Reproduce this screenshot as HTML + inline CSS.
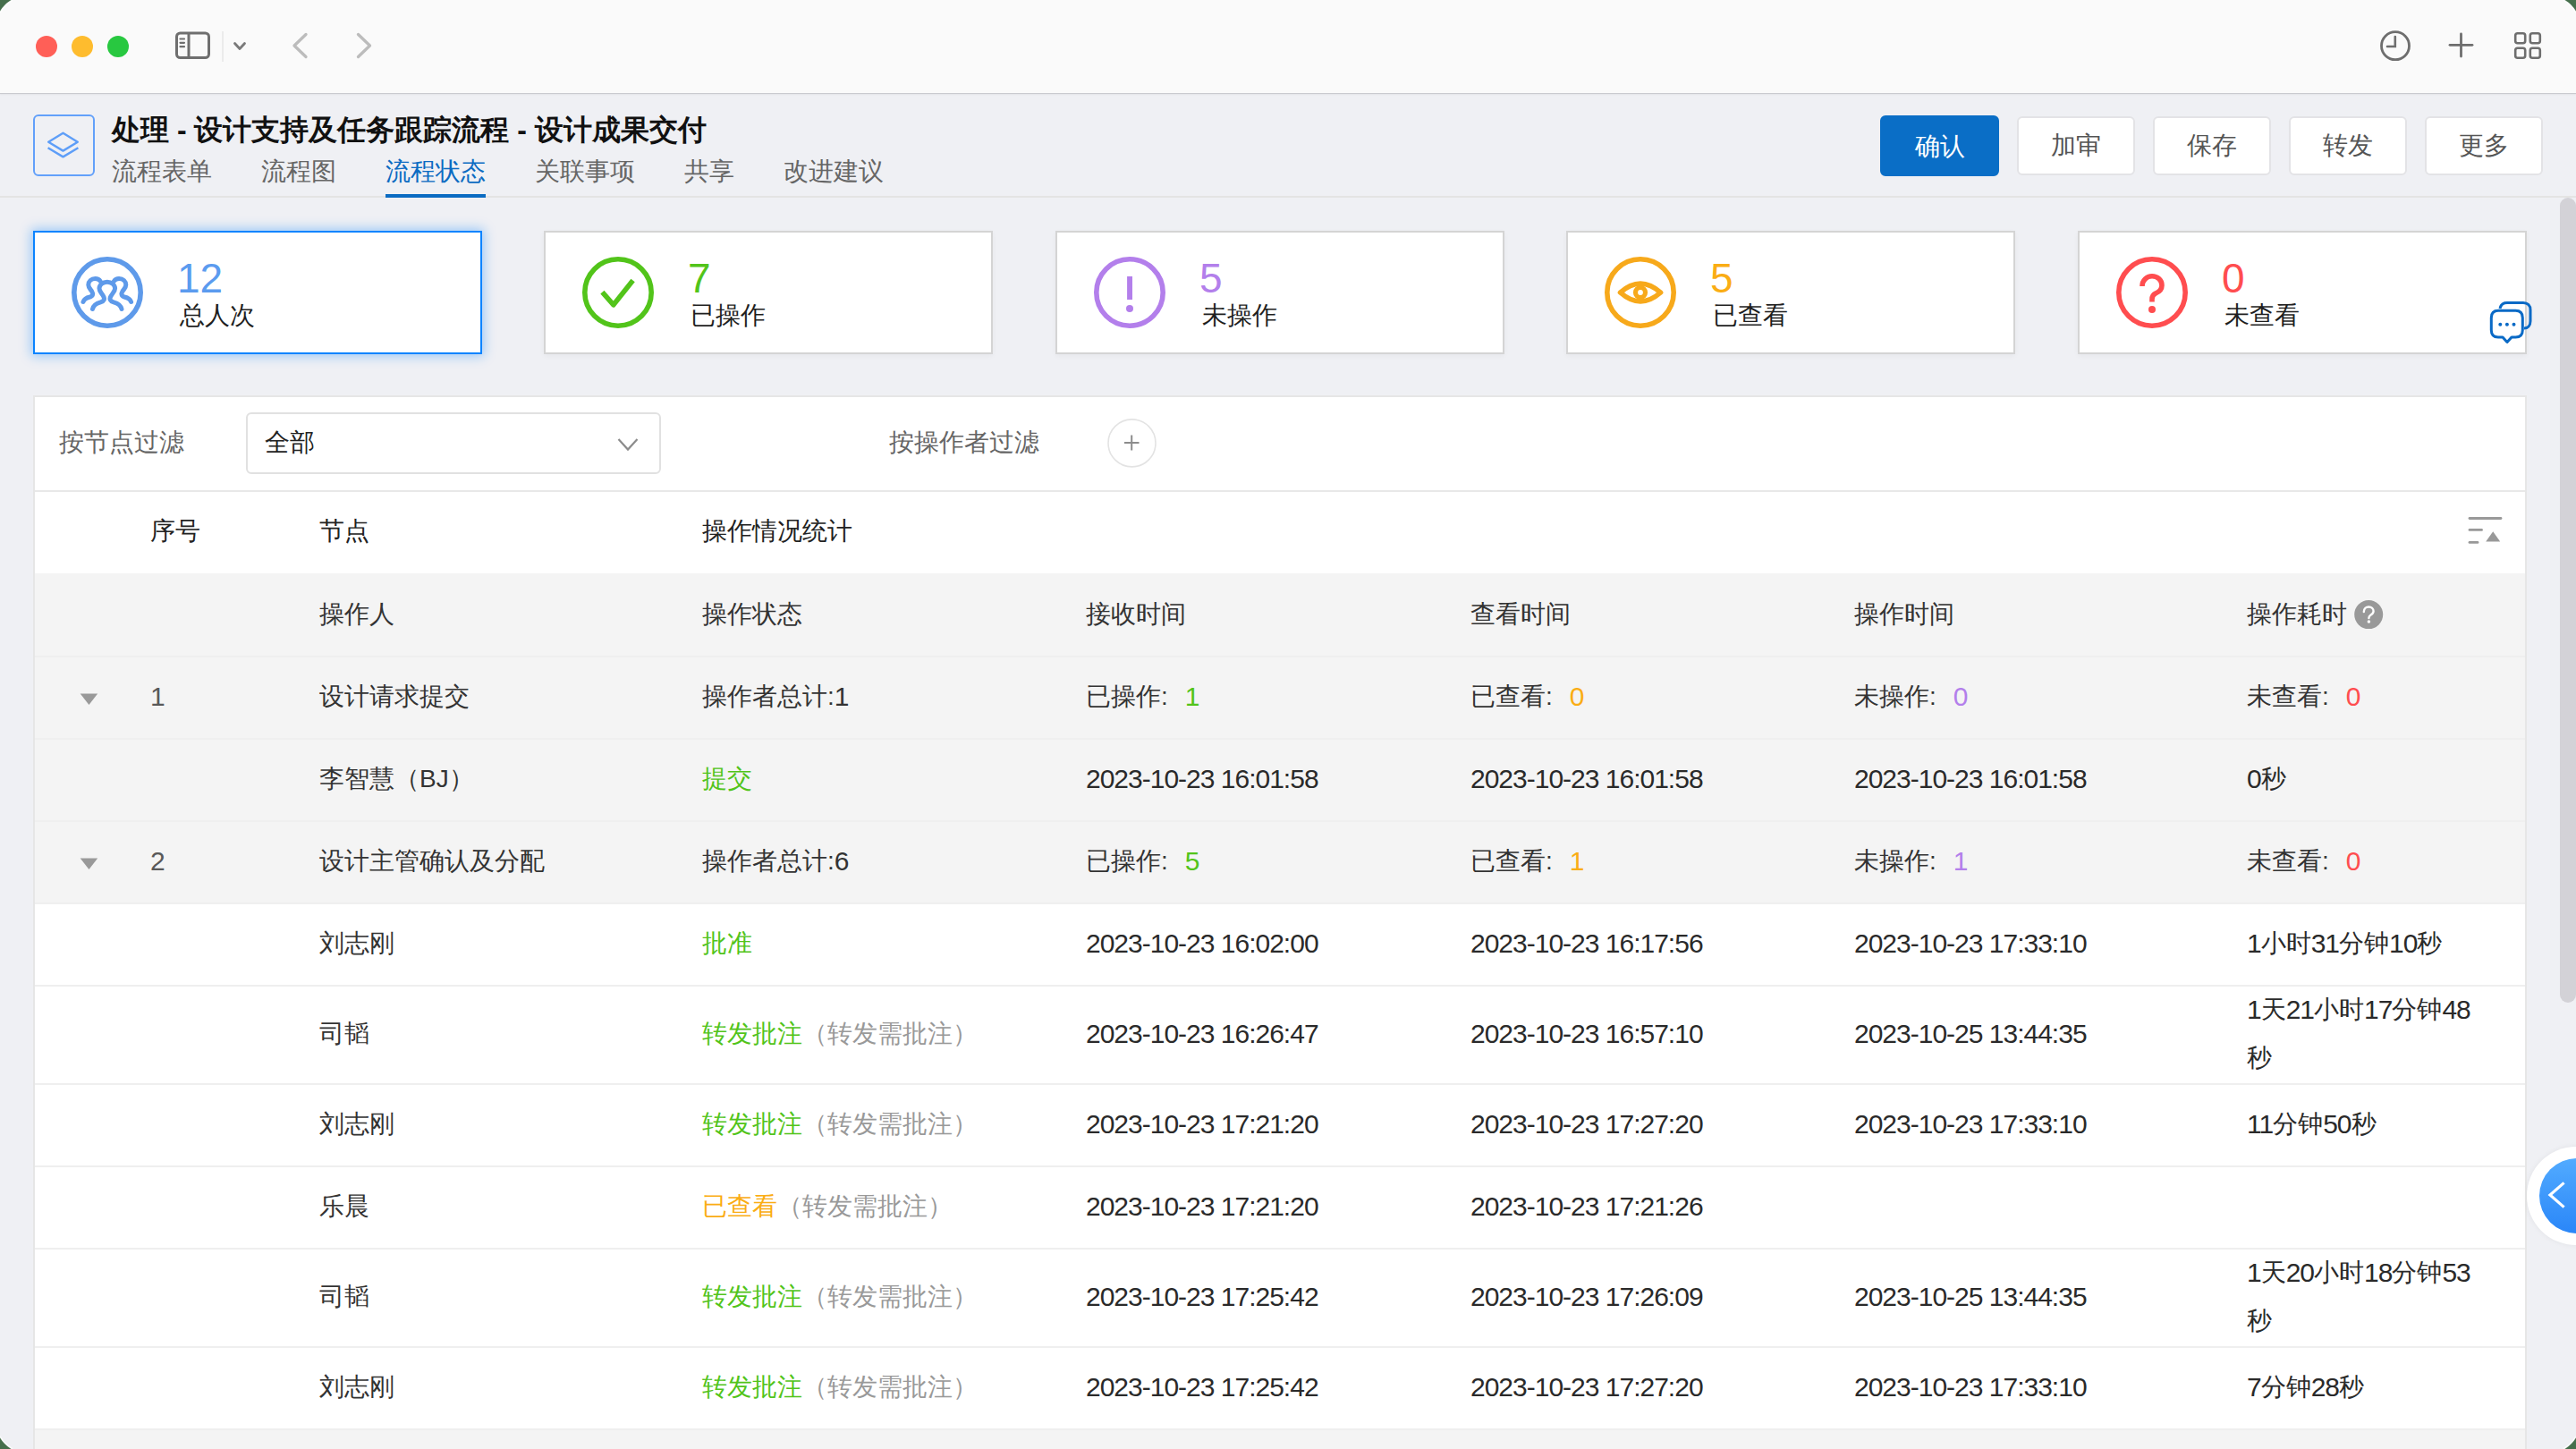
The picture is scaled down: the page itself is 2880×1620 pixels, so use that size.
<!DOCTYPE html>
<html><head><meta charset="utf-8">
<style>
*{margin:0;padding:0;box-sizing:border-box}
html,body{width:2880px;height:1620px;overflow:hidden;background:#466f4c;font-family:"Liberation Sans",sans-serif}
.win{position:absolute;left:0;top:0;width:2880px;height:1620px;overflow:hidden;background:#eff0f4;clip-path:path('M14,0 H2866 Q2875,5 2880,14 V1606 Q2875,1615 2866,1620 H14 Q5,1615 0,1606 V14 Q5,5 14,0 Z')}
.abs{position:absolute}
.t{position:absolute;white-space:nowrap;font-size:28px;line-height:40px;height:40px}
.titlebar{position:absolute;left:0;top:0;width:2880px;height:105px;background:#fafafa;border-bottom:1.5px solid #c9cacf;box-shadow:0 1px 1.5px rgba(0,0,20,.05)}
.hdr-line{position:absolute;left:0;top:219px;width:2880px;height:2px;background:#e4e4e3}
.btn{position:absolute;top:130px;width:132px;height:66px;border-radius:6px;background:#fff;border:2px solid #e3e3e6;font-size:28px;line-height:62px;text-align:center;color:#555}
.btn.pri{background:#0a6ec6;border-color:#0a6ec6;color:#fff;top:129px;height:68px;line-height:66px;width:133px}
.card{position:absolute;top:258px;width:502px;height:138px;background:#fff;border:2px solid #d4d4d4;box-shadow:0 2px 6px rgba(0,0,0,.04)}
.card.sel{border-color:#0a84ff;box-shadow:0 0 12px 2px rgba(10,132,255,.38)}
.card .num{position:absolute;left:159px;top:27px;font-size:46px;line-height:48px}
.card .lab{position:absolute;left:162px;top:73px;font-size:28px;line-height:40px;color:#1f1f1f}
.card svg{position:absolute;left:40px;top:26px}
.panel{position:absolute;left:37px;top:443px;width:2788px;height:1200px;background:#fff;border:2px solid #e6e6e6}
.row{position:absolute;left:0;width:2784px;border-top:2px solid #ededed}
.gray{background:#f4f4f4}
.c333{color:#333}
.cl{margin-right:19px}
.d{font-size:30px;letter-spacing:-1px;vertical-align:top;line-height:40px}
.g{color:#52c41a}.o{color:#faad14}.p{color:#b37feb}.r{color:#ff4d4f}.gr{color:#999}
</style></head><body>
<div class="win">
  <!-- titlebar -->
  <div class="titlebar">
    <div class="abs" style="left:40px;top:40px;width:24px;height:24px;border-radius:50%;background:#ff5f57"></div>
    <div class="abs" style="left:80px;top:40px;width:24px;height:24px;border-radius:50%;background:#febc2e"></div>
    <div class="abs" style="left:120px;top:40px;width:24px;height:24px;border-radius:50%;background:#28c840"></div>
    <svg class="abs" style="left:190px;top:30px" width="240" height="46" viewBox="190 30 240 46">
      <rect x="197.5" y="37" width="36" height="27.5" rx="4" fill="none" stroke="#6f6f6f" stroke-width="3"/>
      <line x1="211" y1="37" x2="211" y2="64.5" stroke="#6f6f6f" stroke-width="3"/>
      <line x1="201.5" y1="43.5" x2="206" y2="43.5" stroke="#6f6f6f" stroke-width="2.2" stroke-linecap="round"/>
      <line x1="201.5" y1="47.8" x2="206" y2="47.8" stroke="#6f6f6f" stroke-width="2.2" stroke-linecap="round"/>
      <line x1="201.5" y1="52.2" x2="206" y2="52.2" stroke="#6f6f6f" stroke-width="2.2" stroke-linecap="round"/>
      <line x1="249" y1="35" x2="249" y2="69" stroke="#e6e6e6" stroke-width="1.5"/>
      <polyline points="262.5,48.5 268,54.5 273.5,48.5" fill="none" stroke="#7a7a7a" stroke-width="2.8" stroke-linecap="round" stroke-linejoin="round"/>
      <polyline points="342,38.5 329,51 342,63.5" fill="none" stroke="#bcbcbc" stroke-width="3.3" stroke-linecap="round" stroke-linejoin="round"/>
      <polyline points="400.5,38.5 413.5,51 400.5,63.5" fill="none" stroke="#bcbcbc" stroke-width="3.3" stroke-linecap="round" stroke-linejoin="round"/>
    </svg>
    <svg class="abs" style="left:2650px;top:25px" width="210" height="55" viewBox="2650 25 210 55">
      <circle cx="2678" cy="51.2" r="15.5" fill="none" stroke="#6e6e6e" stroke-width="2.8"/>
      <polyline points="2677.8,41 2677.8,52 2669,52" fill="none" stroke="#6e6e6e" stroke-width="2.6" stroke-linecap="round"/>
      <line x1="2751.5" y1="38" x2="2751.5" y2="63" stroke="#6e6e6e" stroke-width="2.8" stroke-linecap="round"/>
      <line x1="2739" y1="50.3" x2="2764" y2="50.3" stroke="#6e6e6e" stroke-width="2.8" stroke-linecap="round"/>
      <rect x="2812.2" y="37.2" width="11" height="11" rx="2.5" fill="none" stroke="#6e6e6e" stroke-width="2.6"/>
      <rect x="2828.8" y="37.2" width="11" height="11" rx="2.5" fill="none" stroke="#6e6e6e" stroke-width="2.6"/>
      <rect x="2812.2" y="53.7" width="11" height="11" rx="2.5" fill="none" stroke="#6e6e6e" stroke-width="2.6"/>
      <rect x="2828.8" y="53.7" width="11" height="11" rx="2.5" fill="none" stroke="#6e6e6e" stroke-width="2.6"/>
    </svg>
  </div>

  <!-- page header -->
  <svg class="abs" style="left:30px;top:120px" width="90" height="90" viewBox="30 120 90 90">
    <rect x="38" y="129" width="67" height="67" rx="5" fill="none" stroke="#62a0fa" stroke-width="2"/>
    <polygon points="70.5,148.8 86.8,158.7 70.5,168.6 54.2,158.7" fill="none" stroke="#5e9ef8" stroke-width="2.4" stroke-linejoin="round"/>
    <polyline points="53.6,165.3 70.5,175.4 87.4,165.3" fill="none" stroke="#5e9ef8" stroke-width="2.4" stroke-linejoin="round"/>
  </svg>
  <div class="t" style="left:125px;top:125px;font-size:32px;font-weight:bold;color:#111">处理 - 设计支持及任务跟踪流程 - 设计成果交付</div>
  <div class="t" style="left:125px;top:172px;color:#666">流程表单</div>
  <div class="t" style="left:292px;top:172px;color:#666">流程图</div>
  <div class="t" style="left:431px;top:172px;color:#0b6bc2">流程状态</div>
  <div class="t" style="left:598px;top:172px;color:#666">关联事项</div>
  <div class="t" style="left:765px;top:172px;color:#666">共享</div>
  <div class="t" style="left:876px;top:172px;color:#666">改进建议</div>
  <div class="hdr-line"></div>
  <div class="abs" style="left:431px;top:217px;width:112px;height:4px;background:#0b6bc2"></div>

  <div class="btn pri" style="left:2102px">确认</div>
  <div class="btn" style="left:2255px">加审</div>
  <div class="btn" style="left:2407px">保存</div>
  <div class="btn" style="left:2559px">转发</div>
  <div class="btn" style="left:2711px">更多</div>

  <!-- CARDS -->
  
  <div class="card sel" style="left:37px">
    <svg width="82" height="82" viewBox="9 9 82 82">
      <circle cx="50" cy="50" r="37.2" fill="none" stroke="#5e9aea" stroke-width="5.6"/>
      <g fill="none" stroke="#5e9aea" stroke-width="5" stroke-linecap="round" stroke-linejoin="round">
        <path d="M33.5,68.5 C34.5,63.5 38,62 42.5,60.8 C46.5,59.7 47.5,57.5 45.5,54 C43.5,50.5 41,48.5 41,45.5 A8.8,7.2 0 0 1 58.6,45.5 C58.6,48.5 56,50.5 54,54 C52,57.5 53,59.7 57,60.8 C61.5,62 65,63.5 66,68.5"/>
        <path d="M23,60.5 C24,57.5 27,55.8 30.5,55 C34,54 34.3,51.5 32.8,49 C31.3,46.5 28.8,44.5 28.8,41.5 C28.8,37.5 32,34.5 36.5,34.5 C39,34.5 41,35.5 42.3,37.5"/>
        <path d="M76.6,60.5 C75.6,57.5 72.6,55.8 69.1,55 C65.6,54 65.3,51.5 66.8,49 C68.3,46.5 70.8,44.5 70.8,41.5 C70.8,37.5 67.6,34.5 63.1,34.5 C60.6,34.5 58.6,35.5 57.3,37.5"/>
      </g>
    </svg>
    <div class="num" style="color:#5b9bef">12</div>
    <div class="lab">总人次</div>
  </div>
  <div class="card" style="left:608px">
    <svg width="82" height="82" viewBox="9 9 82 82">
      <circle cx="50" cy="50" r="37.2" fill="none" stroke="#52c41a" stroke-width="5.6"/>
      <polyline points="32.4,49.7 44.9,63.8 66.6,36.6" fill="none" stroke="#52c41a" stroke-width="5.6" stroke-linejoin="round"/>
    </svg>
    <div class="num" style="color:#52c41a">7</div>
    <div class="lab">已操作</div>
  </div>
  <div class="card" style="left:1180px">
    <svg width="82" height="82" viewBox="9 9 82 82">
      <circle cx="50" cy="50" r="37.2" fill="none" stroke="#b37feb" stroke-width="5.6"/>
      <rect x="47.1" y="32" width="5.9" height="26" fill="#b37feb"/>
      <circle cx="50" cy="68" r="4" fill="#b37feb"/>
    </svg>
    <div class="num" style="color:#b37feb">5</div>
    <div class="lab">未操作</div>
  </div>
  <div class="card" style="left:1751px">
    <svg width="82" height="82" viewBox="9 9 82 82">
      <circle cx="50" cy="50" r="37.2" fill="none" stroke="#f7a91b" stroke-width="5.6"/>
      <path d="M27.5,50 Q50,30.2 72.6,50 Q50,69.8 27.5,50 Z" fill="none" stroke="#f7a91b" stroke-width="5.6" stroke-linejoin="round"/>
      <circle cx="50" cy="50" r="5.5" fill="none" stroke="#f7a91b" stroke-width="5.2"/>
    </svg>
    <div class="num" style="color:#faad14">5</div>
    <div class="lab">已查看</div>
  </div>
  <div class="card" style="left:2323px">
    <svg width="82" height="82" viewBox="9 9 82 82">
      <circle cx="50" cy="50" r="37.2" fill="none" stroke="#ff4d4f" stroke-width="5.6"/>
      <path d="M39,43 C39,36.5 44,31.8 50,31.8 C56,31.8 61,36 61,42 C61,47 57.5,49.5 54,51 C51,52.5 50,55 50,57.5 L50,60.5" fill="none" stroke="#ff4d4f" stroke-width="5.6"/>
      <circle cx="50" cy="69" r="4" fill="#ff4d4f"/>
    </svg>
    <div class="num" style="color:#ff4d4f">0</div>
    <div class="lab">未查看</div>
  </div>
  <svg class="abs" style="left:2775px;top:330px" width="64" height="60" viewBox="2775 330 64 60">
    <path d="M2795,345 C2796,340 2799,338.5 2803,338.5 L2821,338.5 C2826,338.5 2829,341.5 2829,346.5 L2829,359 C2829,364 2826,367 2822,367" fill="none" stroke="#0a6ac6" stroke-width="3"/>
    <path d="M2793,347.3 L2812.5,347.3 C2817.5,347.3 2820.3,350.3 2820.3,355.3 L2820.3,369 C2820.3,374 2817.5,377 2812.5,377 L2808,377 L2803,382.5 L2798,377 L2793,377 C2788,377 2785.3,374 2785.3,369 L2785.3,355.3 C2785.3,350.3 2788,347.3 2793,347.3 Z" fill="#fff" stroke="#0a6ac6" stroke-width="3" stroke-linejoin="round"/>
    <circle cx="2795.3" cy="362.8" r="2" fill="#0a6ac6"/>
    <circle cx="2802.9" cy="362.8" r="2" fill="#0a6ac6"/>
    <circle cx="2810.5" cy="362.8" r="2" fill="#0a6ac6"/>
  </svg>


  <!-- PANEL -->
<div class="abs" style="left:37px;top:442px;width:2788px;height:1200px;background:#fff;border:2px solid #e6e6e6"></div>
<div class="t" style="left:66px;top:475px;color:#666">按节点过滤</div>
<div class="abs" style="left:275px;top:461px;width:464px;height:69px;border:2px solid #e1e1e1;border-radius:6px;background:#fff"></div>
<div class="t" style="left:296px;top:475px;color:#222">全部</div>
<svg class="abs" style="left:680px;top:480px" width="44" height="34" viewBox="680 480 44 34"><polyline points="691.5,491 702,502.5 712.5,491" fill="none" stroke="#8c8c8c" stroke-width="2.2"/></svg>
<div class="t" style="left:994px;top:475px;color:#666">按操作者过滤</div>
<svg class="abs" style="left:1230px;top:460px" width="72" height="72" viewBox="1230 460 72 72"><circle cx="1265.5" cy="495.4" r="26.5" fill="none" stroke="#e3e3e3" stroke-width="1.6"/><line x1="1257" y1="495" x2="1273.5" y2="495" stroke="#8c8c8c" stroke-width="2"/><line x1="1265.2" y1="486.5" x2="1265.2" y2="503.5" stroke="#8c8c8c" stroke-width="2"/></svg>
<div class="abs" style="left:39px;top:548px;width:2784px;height:2px;background:#e8e8e8"></div>
<div class="t" style="left:168px;top:574px;color:#222">序号</div>
<div class="t" style="left:357px;top:574px;color:#222">节点</div>
<div class="t" style="left:785px;top:574px;color:#222">操作情况统计</div>
<svg class="abs" style="left:2750px;top:570px" width="56" height="46" viewBox="2750 570 56 46"><g stroke="#999" stroke-width="2.8" stroke-linecap="round"><line x1="2761" y1="579.5" x2="2796" y2="579.5"/><line x1="2761" y1="592.4" x2="2774.5" y2="592.4"/><line x1="2761" y1="606.4" x2="2770" y2="606.4"/></g><polygon points="2787.2,594.3 2795.2,605.4 2779.2,605.4" fill="#999"/></svg>
<div class="abs gray" style="left:39px;top:641px;width:2784px;height:92px"></div>
<div class="t" style="left:357px;top:667px;color:#333">操作人</div>
<div class="t" style="left:785px;top:667px;color:#333">操作状态</div>
<div class="t" style="left:1214px;top:667px;color:#333">接收时间</div>
<div class="t" style="left:1644px;top:667px;color:#333">查看时间</div>
<div class="t" style="left:2073px;top:667px;color:#333">操作时间</div>
<div class="t" style="left:2512px;top:667px;color:#333">操作耗时</div>
<svg class="abs" style="left:2628px;top:667px" width="40" height="40" viewBox="2628 667 40 40"><circle cx="2648.2" cy="687.1" r="16" fill="#999"/><path d="M2642.8,684 C2642.8,680.5 2645.3,678.5 2648.3,678.5 C2651.3,678.5 2653.6,680.5 2653.6,683.2 C2653.6,685.6 2651.8,686.8 2650.3,687.8 C2648.9,688.8 2648.4,689.6 2648.4,691" fill="none" stroke="#fff" stroke-width="2.4" stroke-linecap="round"/><circle cx="2648.4" cy="695" r="1.8" fill="#fff"/></svg>
<div class="abs" style="left:39px;top:733px;width:2784px;height:92px;background:#f4f4f4;border-top:2px solid #efefef"></div>
<div class="abs" style="left:39px;top:825px;width:2784px;height:92px;background:#f4f4f4;border-top:2px solid #efefef"></div>
<div class="abs" style="left:39px;top:917px;width:2784px;height:92px;background:#f4f4f4;border-top:2px solid #efefef"></div>
<div class="abs" style="left:39px;top:1009px;width:2784px;height:92px;background:#fff;border-top:2px solid #efefef"></div>
<div class="abs" style="left:39px;top:1101px;width:2784px;height:110px;background:#fff;border-top:2px solid #efefef"></div>
<div class="abs" style="left:39px;top:1211px;width:2784px;height:92px;background:#fff;border-top:2px solid #efefef"></div>
<div class="abs" style="left:39px;top:1303px;width:2784px;height:92px;background:#fff;border-top:2px solid #efefef"></div>
<div class="abs" style="left:39px;top:1395px;width:2784px;height:110px;background:#fff;border-top:2px solid #efefef"></div>
<div class="abs" style="left:39px;top:1505px;width:2784px;height:92px;background:#fff;border-top:2px solid #efefef"></div>
<div class="abs" style="left:39px;top:1597px;width:2784px;height:60px;background:#f4f4f4;border-top:2px solid #efefef"></div>
<svg class="abs" style="left:85px;top:767px" width="30" height="24" viewBox="85 767 30 24"><polygon points="89.7,775.5 109.2,775.5 99.45,788" fill="#999"/></svg>
<div class="t" style="left:168px;top:759px;color:#595959"><span class="d">1</span></div>
<div class="t" style="left:357px;top:759px;color:#333">设计请求提交</div>
<div class="t" style="left:785px;top:759px;color:#333">操作者总计:<span class="d">1</span></div>
<div class="t" style="left:1214px;top:759px;color:#333">已操作<span class="cl">:</span><span class="g"><span class="d">1</span></span></div>
<div class="t" style="left:1644px;top:759px;color:#333">已查看<span class="cl">:</span><span class="o"><span class="d">0</span></span></div>
<div class="t" style="left:2073px;top:759px;color:#333">未操作<span class="cl">:</span><span class="p"><span class="d">0</span></span></div>
<div class="t" style="left:2512px;top:759px;color:#333">未查看<span class="cl">:</span><span class="r"><span class="d">0</span></span></div>
<div class="t" style="left:357px;top:851px;color:#333">李智慧（BJ）</div>
<div class="t" style="left:785px;top:851px;color:#52c41a">提交</div>
<div class="t" style="left:1214px;top:851px;color:#2a2a2a"><span class="d">2023-10-23 16:01:58</span></div>
<div class="t" style="left:1644px;top:851px;color:#2a2a2a"><span class="d">2023-10-23 16:01:58</span></div>
<div class="t" style="left:2073px;top:851px;color:#2a2a2a"><span class="d">2023-10-23 16:01:58</span></div>
<div class="t" style="left:2512px;top:851px;color:#2a2a2a"><span class="d">0</span>秒</div>
<svg class="abs" style="left:85px;top:951px" width="30" height="24" viewBox="85 951 30 24"><polygon points="89.7,959.5 109.2,959.5 99.45,972" fill="#999"/></svg>
<div class="t" style="left:168px;top:943px;color:#595959"><span class="d">2</span></div>
<div class="t" style="left:357px;top:943px;color:#333">设计主管确认及分配</div>
<div class="t" style="left:785px;top:943px;color:#333">操作者总计:<span class="d">6</span></div>
<div class="t" style="left:1214px;top:943px;color:#333">已操作<span class="cl">:</span><span class="g"><span class="d">5</span></span></div>
<div class="t" style="left:1644px;top:943px;color:#333">已查看<span class="cl">:</span><span class="o"><span class="d">1</span></span></div>
<div class="t" style="left:2073px;top:943px;color:#333">未操作<span class="cl">:</span><span class="p"><span class="d">1</span></span></div>
<div class="t" style="left:2512px;top:943px;color:#333">未查看<span class="cl">:</span><span class="r"><span class="d">0</span></span></div>
<div class="t" style="left:357px;top:1035px;color:#333">刘志刚</div>
<div class="t" style="left:785px;top:1035px;"><span class="g">批准</span></div>
<div class="t" style="left:1214px;top:1035px;color:#2a2a2a"><span class="d">2023-10-23 16:02:00</span></div>
<div class="t" style="left:1644px;top:1035px;color:#2a2a2a"><span class="d">2023-10-23 16:17:56</span></div>
<div class="t" style="left:2073px;top:1035px;color:#2a2a2a"><span class="d">2023-10-23 17:33:10</span></div>
<div class="t" style="left:2512px;top:1035px;color:#2a2a2a"><span class="d">1</span>小时<span class="d">31</span>分钟<span class="d">10</span>秒</div>
<div class="t" style="left:357px;top:1136px;color:#333">司韬</div>
<div class="t" style="left:785px;top:1136px;"><span class="g">转发批注</span><span class="gr">（转发需批注）</span></div>
<div class="t" style="left:1214px;top:1136px;color:#2a2a2a"><span class="d">2023-10-23 16:26:47</span></div>
<div class="t" style="left:1644px;top:1136px;color:#2a2a2a"><span class="d">2023-10-23 16:57:10</span></div>
<div class="t" style="left:2073px;top:1136px;color:#2a2a2a"><span class="d">2023-10-25 13:44:35</span></div>
<div class="t" style="left:2512px;top:1109px;color:#2a2a2a"><span class="d">1</span>天<span class="d">21</span>小时<span class="d">17</span>分钟<span class="d">48</span></div>
<div class="t" style="left:2512px;top:1163px;color:#2a2a2a">秒</div>
<div class="t" style="left:357px;top:1237px;color:#333">刘志刚</div>
<div class="t" style="left:785px;top:1237px;"><span class="g">转发批注</span><span class="gr">（转发需批注）</span></div>
<div class="t" style="left:1214px;top:1237px;color:#2a2a2a"><span class="d">2023-10-23 17:21:20</span></div>
<div class="t" style="left:1644px;top:1237px;color:#2a2a2a"><span class="d">2023-10-23 17:27:20</span></div>
<div class="t" style="left:2073px;top:1237px;color:#2a2a2a"><span class="d">2023-10-23 17:33:10</span></div>
<div class="t" style="left:2512px;top:1237px;color:#2a2a2a"><span class="d">11</span>分钟<span class="d">50</span>秒</div>
<div class="t" style="left:357px;top:1329px;color:#333">乐晨</div>
<div class="t" style="left:785px;top:1329px;"><span class="o">已查看</span><span class="gr">（转发需批注）</span></div>
<div class="t" style="left:1214px;top:1329px;color:#2a2a2a"><span class="d">2023-10-23 17:21:20</span></div>
<div class="t" style="left:1644px;top:1329px;color:#2a2a2a"><span class="d">2023-10-23 17:21:26</span></div>
<div class="t" style="left:357px;top:1430px;color:#333">司韬</div>
<div class="t" style="left:785px;top:1430px;"><span class="g">转发批注</span><span class="gr">（转发需批注）</span></div>
<div class="t" style="left:1214px;top:1430px;color:#2a2a2a"><span class="d">2023-10-23 17:25:42</span></div>
<div class="t" style="left:1644px;top:1430px;color:#2a2a2a"><span class="d">2023-10-23 17:26:09</span></div>
<div class="t" style="left:2073px;top:1430px;color:#2a2a2a"><span class="d">2023-10-25 13:44:35</span></div>
<div class="t" style="left:2512px;top:1403px;color:#2a2a2a"><span class="d">1</span>天<span class="d">20</span>小时<span class="d">18</span>分钟<span class="d">53</span></div>
<div class="t" style="left:2512px;top:1457px;color:#2a2a2a">秒</div>
<div class="t" style="left:357px;top:1531px;color:#333">刘志刚</div>
<div class="t" style="left:785px;top:1531px;"><span class="g">转发批注</span><span class="gr">（转发需批注）</span></div>
<div class="t" style="left:1214px;top:1531px;color:#2a2a2a"><span class="d">2023-10-23 17:25:42</span></div>
<div class="t" style="left:1644px;top:1531px;color:#2a2a2a"><span class="d">2023-10-23 17:27:20</span></div>
<div class="t" style="left:2073px;top:1531px;color:#2a2a2a"><span class="d">2023-10-23 17:33:10</span></div>
<div class="t" style="left:2512px;top:1531px;color:#2a2a2a"><span class="d">7</span>分钟<span class="d">28</span>秒</div>
<div class="abs" style="left:2825px;top:1282px;width:110px;height:110px;border-radius:50%;background:#fff;box-shadow:0 0 6px rgba(0,0,0,.06)"></div>
<div class="abs" style="left:2839px;top:1295px;width:84px;height:84px;border-radius:50%;background:linear-gradient(180deg,#52abff,#2a86f8)"></div>
<svg class="abs" style="left:2840px;top:1310px" width="40" height="52" viewBox="2840 1310 40 52"><polyline points="2866.6,1322.4 2851,1336 2866.6,1349.6" fill="none" stroke="#fff" stroke-width="3.2"/></svg>

  <!-- scrollbar -->
  <div class="abs" style="left:2862px;top:221px;width:18px;height:900px;border-radius:9px;background:#d3d2d7"></div>
</div>
<svg class="abs" style="left:0;top:0;pointer-events:none" width="2880" height="1620" viewBox="0 0 2880 1620">
  <g stroke="#ffffff" stroke-width="1.6" fill="none" opacity=".9">
    <path d="M14,0 Q5,5 0,14"/>
    <path d="M2866,0 Q2875,5 2880,14"/>
    <path d="M0,1606 Q5,1615 14,1620"/>
    <path d="M2880,1606 Q2875,1615 2866,1620"/>
  </g>
</svg>
</body></html>
